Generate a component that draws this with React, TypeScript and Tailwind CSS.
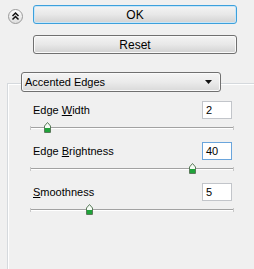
import React from "react";

const font = { fontFamily: '"Liberation Sans", Arial, sans-serif' };

const Thumb = () => (
  <svg width="7" height="11" viewBox="0 0 7 11">
    <path d="M0.5 4 L3.5 0.5 L6.5 4 L6.5 10.5 L0.5 10.5 Z" fill="#f4fbf4" stroke="#5a7a5a" strokeWidth="1" />
    <rect x="1" y="6" width="5" height="4" fill="#1fa33a" />
  </svg>
);

const CollapseIcon = () => (
  <svg width="15" height="15" viewBox="0 0 15 15">
    <defs>
      <linearGradient id="cg" x1="0" y1="0" x2="0" y2="1">
        <stop offset="0" stopColor="#ffffff" />
        <stop offset="1" stopColor="#dcdcdc" />
      </linearGradient>
    </defs>
    <circle cx="7.5" cy="7.5" r="7" fill="url(#cg)" stroke="#9a9a9a" />
    <path d="M4.5 7 L7.5 4 L10.5 7 M4.5 10.5 L7.5 7.5 L10.5 10.5" fill="none" stroke="#111" strokeWidth="1.5" />
  </svg>
);

type Row = { label: string; before: string; key: string; after: string; value: string; left: number; focused?: boolean };

const rows: Row[] = [
  { label: "", before: "Edge ", key: "W", after: "idth", value: "2", left: 14 },
  { label: "", before: "Edge ", key: "B", after: "rightness", value: "40", left: 159, focused: true },
  { label: "", before: "", key: "S", after: "moothness", value: "5", left: 56 },
];

const SliderRow = ({ row }: { row: Row }) => (
  <div className="flex flex-col">
    <div className="flex w-[199px] h-[18px] items-center justify-between">
      <span className="text-[11px] text-black">
        {row.before}
        <span className="underline">{row.key}</span>
        {row.after}
      </span>
      <div
        className={`w-[30px] h-[18px] bg-white border flex items-center pl-[3px] text-[11px] text-black ${
          row.focused ? "border-[#6aa5dc]" : "border-[#c2c5ca]"
        }`}
      >
        {row.value}
      </div>
    </div>
    <div className="relative h-[23px] -ml-[3px] w-[204px]">
      <div className="absolute left-0 right-0 top-[8px] h-[2px] border-t border-[#a2a2a2] border-b border-b-white" />
      <div className="absolute left-0 top-[7px] w-px h-[4px] bg-[#c8c8c8]" />
      <div className="absolute right-0 top-[7px] w-px h-[4px] bg-[#c8c8c8]" />
      <div className="absolute top-[3px]" style={{ left: row.left }}>
        <Thumb />
      </div>
    </div>
  </div>
);

export default function App() {
  return (
    <div className="w-[254px] h-[269px] bg-[#f0f0f0] overflow-hidden flex flex-col" style={font}>
      <div className="flex pt-[5px]">
        <div className="ml-[8px] mt-[4px] w-[15px] h-[15px]">
          <CollapseIcon />
        </div>
        <div className="ml-[10px] flex flex-col gap-[11px]">
          <button className="w-[204px] h-[19px] rounded-[3px] border border-[#3ca0dc] bg-gradient-to-b from-[#f4f4f4] via-[#e8e8e8] to-[#d2d2d2] text-[12px] text-black flex items-center justify-center shadow-[inset_0_0_0_1px_#c8e6f8]">
            OK
          </button>
          <button className="w-[204px] h-[19px] rounded-[3px] border border-[#707070] bg-gradient-to-b from-[#f4f4f4] via-[#e8e8e8] to-[#d2d2d2] text-[12px] text-black flex items-center justify-center shadow-[inset_0_0_0_1px_#fafafa]">
            Reset
          </button>
        </div>
      </div>
      <div className="ml-[7px] mt-[29px] flex-1 border-l border-t border-[#d5d9dd] shadow-[inset_1px_1px_0_#ffffff]">
        <div className="-mt-[12px] ml-[13px] w-[200px] h-[20px] rounded-[3px] border border-[#707070] bg-gradient-to-b from-[#f4f4f4] via-[#ebebeb] to-[#d9d9d9] flex items-center justify-between pl-[3px] pr-[8px] shadow-[inset_0_0_0_1px_#fafafa]">
          <span className="text-[11px] text-black">Accented Edges</span>
          <svg width="7" height="4" viewBox="0 0 7 4">
            <path d="M0 0 L7 0 L3.5 4 Z" fill="#111" />
          </svg>
        </div>
        <div className="ml-[25px] mt-[9px] flex flex-col">
          {rows.map((row, i) => (
            <SliderRow key={i} row={row} />
          ))}
        </div>
      </div>
    </div>
  );
}
